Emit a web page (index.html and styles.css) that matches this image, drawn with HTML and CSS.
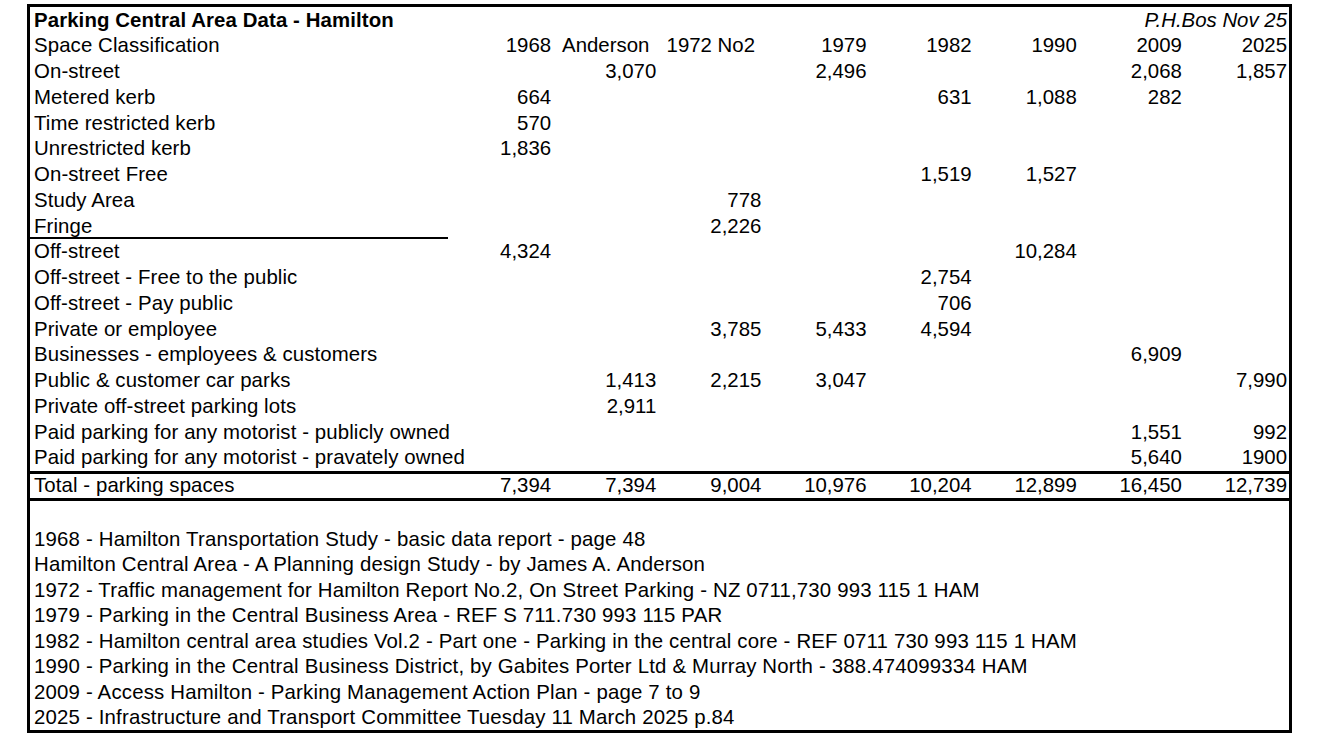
FILE: index.html
```html
<!DOCTYPE html>
<html>
<head>
<meta charset="utf-8">
<title>Parking Central Area Data - Hamilton</title>
<link rel="stylesheet" href="styles.css">
</head>
<body>
<div class="sheet">
  <div class="row title-row">
    <div class="label bold">Parking Central Area Data - Hamilton</div>
    <div class="author">P.H.Bos Nov 25</div>
  </div>
  <div class="row">
    <div class="label">Space Classification</div>
    <div class="num">1968</div><div class="ctr">Anderson</div><div class="ctr">1972 No2</div><div class="num">1979</div><div class="num">1982</div><div class="num">1990</div><div class="num">2009</div><div class="num">2025</div>
  </div>
  <div class="row">
    <div class="label">On-street</div>
    <div class="num"></div><div class="num">3,070</div><div class="num"></div><div class="num">2,496</div><div class="num"></div><div class="num"></div><div class="num">2,068</div><div class="num">1,857</div>
  </div>
  <div class="row">
    <div class="label">Metered kerb</div>
    <div class="num">664</div><div class="num"></div><div class="num"></div><div class="num"></div><div class="num">631</div><div class="num">1,088</div><div class="num">282</div><div class="num"></div>
  </div>
  <div class="row">
    <div class="label">Time restricted kerb</div>
    <div class="num">570</div><div class="num"></div><div class="num"></div><div class="num"></div><div class="num"></div><div class="num"></div><div class="num"></div><div class="num"></div>
  </div>
  <div class="row">
    <div class="label">Unrestricted kerb</div>
    <div class="num">1,836</div><div class="num"></div><div class="num"></div><div class="num"></div><div class="num"></div><div class="num"></div><div class="num"></div><div class="num"></div>
  </div>
  <div class="row">
    <div class="label">On-street Free</div>
    <div class="num"></div><div class="num"></div><div class="num"></div><div class="num"></div><div class="num">1,519</div><div class="num">1,527</div><div class="num"></div><div class="num"></div>
  </div>
  <div class="row">
    <div class="label">Study Area</div>
    <div class="num"></div><div class="num"></div><div class="num">778</div><div class="num"></div><div class="num"></div><div class="num"></div><div class="num"></div><div class="num"></div>
  </div>
  <div class="row">
    <div class="label underline">Fringe</div>
    <div class="num"></div><div class="num"></div><div class="num">2,226</div><div class="num"></div><div class="num"></div><div class="num"></div><div class="num"></div><div class="num"></div>
  </div>
  <div class="row">
    <div class="label">Off-street</div>
    <div class="num">4,324</div><div class="num"></div><div class="num"></div><div class="num"></div><div class="num"></div><div class="num">10,284</div><div class="num"></div><div class="num"></div>
  </div>
  <div class="row">
    <div class="label">Off-street - Free to the public</div>
    <div class="num"></div><div class="num"></div><div class="num"></div><div class="num"></div><div class="num">2,754</div><div class="num"></div><div class="num"></div><div class="num"></div>
  </div>
  <div class="row">
    <div class="label">Off-street - Pay public</div>
    <div class="num"></div><div class="num"></div><div class="num"></div><div class="num"></div><div class="num">706</div><div class="num"></div><div class="num"></div><div class="num"></div>
  </div>
  <div class="row">
    <div class="label">Private or employee</div>
    <div class="num"></div><div class="num"></div><div class="num">3,785</div><div class="num">5,433</div><div class="num">4,594</div><div class="num"></div><div class="num"></div><div class="num"></div>
  </div>
  <div class="row">
    <div class="label">Businesses - employees &amp; customers</div>
    <div class="num"></div><div class="num"></div><div class="num"></div><div class="num"></div><div class="num"></div><div class="num"></div><div class="num">6,909</div><div class="num"></div>
  </div>
  <div class="row">
    <div class="label">Public &amp; customer car parks</div>
    <div class="num"></div><div class="num">1,413</div><div class="num">2,215</div><div class="num">3,047</div><div class="num"></div><div class="num"></div><div class="num"></div><div class="num">7,990</div>
  </div>
  <div class="row">
    <div class="label">Private off-street parking lots</div>
    <div class="num"></div><div class="num">2,911</div><div class="num"></div><div class="num"></div><div class="num"></div><div class="num"></div><div class="num"></div><div class="num"></div>
  </div>
  <div class="row">
    <div class="label">Paid parking for any motorist - publicly owned</div>
    <div class="num"></div><div class="num"></div><div class="num"></div><div class="num"></div><div class="num"></div><div class="num"></div><div class="num">1,551</div><div class="num">992</div>
  </div>
  <div class="row">
    <div class="label">Paid parking for any motorist - pravately owned</div>
    <div class="num"></div><div class="num"></div><div class="num"></div><div class="num"></div><div class="num"></div><div class="num"></div><div class="num">5,640</div><div class="num">1900</div>
  </div>
  <div class="row total-row">
    <div class="label">Total - parking spaces</div>
    <div class="num">7,394</div><div class="num">7,394</div><div class="num">9,004</div><div class="num">10,976</div><div class="num">10,204</div><div class="num">12,899</div><div class="num">16,450</div><div class="num">12,739</div>
  </div>
  <div class="notes">
    <div class="note"></div>
    <div class="note">1968 - Hamilton Transportation Study - basic data report - page 48</div>
    <div class="note">Hamilton Central Area - A Planning design Study - by James A. Anderson</div>
    <div class="note">1972 - Traffic management for Hamilton Report No.2, On Street Parking - NZ 0711,730 993 115 1 HAM</div>
    <div class="note">1979 - Parking in the Central Business Area - REF S 711.730 993 115 PAR</div>
    <div class="note">1982 - Hamilton central area studies Vol.2 - Part one - Parking in the central core - REF 0711 730 993 115 1 HAM</div>
    <div class="note">1990 - Parking in the Central Business District, by Gabites Porter Ltd &amp; Murray North - 388.474099334 HAM</div>
    <div class="note">2009 - Access Hamilton - Parking Management Action Plan - page 7 to 9</div>
    <div class="note">2025 - Infrastructure and Transport Committee Tuesday 11 March 2025 p.84</div>
  </div>
</div>
</body>
</html>
```

FILE: styles.css
```css
html, body {
  margin: 0;
  padding: 0;
  background: #ffffff;
}

body {
  font-family: "Liberation Sans", Arial, sans-serif;
  font-size: 20.4px;
  color: #000000;
}

.sheet {
  width: 1259px;
  margin: 4px 0 0 27px;
  border: 3px solid #000000;
}

.row {
  display: grid;
  grid-template-columns: 418px repeat(8, 1fr);
  height: 25.75px;
  box-sizing: border-box;
}

.row > div {
  display: flex;
  align-items: center;
  white-space: nowrap;
  line-height: 1;
  box-sizing: border-box;
}

.label {
  padding-left: 4px;
  letter-spacing: 0.1px;
}

.bold {
  font-weight: bold;
}

.num {
  justify-content: flex-end;
  padding-right: 2px;
}

.ctr {
  justify-content: center;
}

.title-row {
  display: flex;
  justify-content: space-between;
}

.title-row .label {
  flex: 0 0 auto;
}

.author {
  font-style: italic;
  padding-right: 2px;
}

.underline {
  border-bottom: 2px solid #000000;
  padding-top: 2px;
}

.total-row {
  height: 30px;
  border-top: 3px solid #000000;
  border-bottom: 3px solid #000000;
}

.notes {
  display: flex;
  flex-direction: column;
}

.note {
  height: 25.5px;
  display: flex;
  align-items: center;
  padding-left: 4px;
  white-space: nowrap;
  line-height: 1;
  letter-spacing: 0.18px;
}
```
